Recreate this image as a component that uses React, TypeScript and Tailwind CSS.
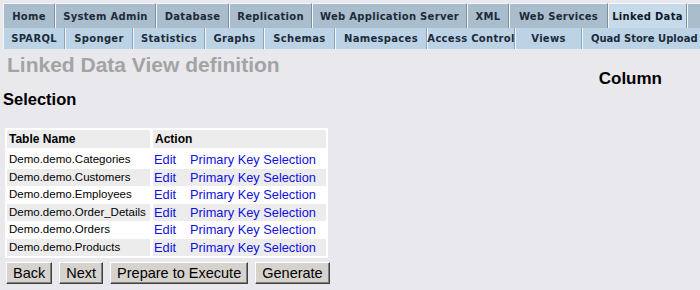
import React from "react";

const topTabs: { label: string; w: number; active?: boolean }[] = [
  { label: "Home", w: 52 },
  { label: "System Admin", w: 101 },
  { label: "Database", w: 73 },
  { label: "Replication", w: 83 },
  { label: "Web Application Server", w: 155 },
  { label: "XML", w: 42 },
  { label: "Web Services", w: 99 },
  { label: "Linked Data", w: 79, active: true },
  { label: "", w: 20 },
];

const subTabs: { label: string; w: number }[] = [
  { label: "SPARQL", w: 62 },
  { label: "Sponger", w: 68 },
  { label: "Statistics", w: 72 },
  { label: "Graphs", w: 59 },
  { label: "Schemas", w: 71 },
  { label: "Namespaces", w: 92 },
  { label: "Access Control", w: 88 },
  { label: "Views", w: 67 },
  { label: "Quad Store Upload", w: 130 },
];

const tables = [
  "Demo.demo.Categories",
  "Demo.demo.Customers",
  "Demo.demo.Employees",
  "Demo.demo.Order_Details",
  "Demo.demo.Orders",
  "Demo.demo.Products",
];

function Btn({ children }: { children: React.ReactNode }) {
  return (
    <button className="h-[22px] px-[6px] bg-[#d6d3ce] text-[14.5px] leading-none text-black border border-t-white border-l-white border-r-[#404040] border-b-[#404040] shadow-[inset_-1px_-1px_0_#808080]">
      {children}
    </button>
  );
}

export default function App() {
  return (
    <div className="w-[700px] h-[290px] overflow-hidden bg-[#e9e8ed] font-['Liberation_Sans',Arial,sans-serif]">
      <div className="pt-[3px] pl-[3px] font-['DejaVu_Sans',Verdana,sans-serif] font-bold text-[10px] tracking-[0.3px] text-[#1c2b3a]">
        <div className="flex h-[25px] whitespace-nowrap">
          {topTabs.map((t, i) => (
            <div
              key={i}
              style={{ width: t.w }}
              className={`shrink-0 flex items-center justify-center border-t border-l border-t-[#f4f7fa] border-l-[#f4f7fa] border-r border-r-[#7c8f9f] ${
                t.active ? "bg-[#c6dae9] text-[#0d1a28]" : "bg-[#a9bdcc]"
              }`}
            >
              {t.label}
            </div>
          ))}
        </div>
        <div className="flex h-[21px] whitespace-nowrap">
          {subTabs.map((t, i) => (
            <div
              key={i}
              style={{ width: t.w }}
              className={`shrink-0 flex items-center bg-[#bcd3e6] border-l border-l-[#f4f7fa] border-r border-r-[#8ea3b5] ${
                i === subTabs.length - 1 ? "justify-start pl-[8px] tracking-normal" : "justify-center"
              }`}
            >
              {t.label}
            </div>
          ))}
        </div>
      </div>

      <div className="flex justify-between">
        <div>
          <div className="pl-[7px] pt-[5px] text-[21px] font-bold text-[#a3a3a3] leading-[22px]">
            Linked Data View definition
          </div>
          <div className="pl-[3px] pt-[13px] text-[16.5px] font-bold text-black leading-[20px]">
            Selection
          </div>
        </div>
        <div className="pr-[38px] pt-[20px] text-[17px] font-bold text-black leading-[20px]">Column</div>
      </div>

      <div className="ml-[5px] mt-[19px] w-[323px] bg-white p-[2px] text-[11.5px]">
        <div className="grid grid-cols-[143px_1fr] gap-x-[3px]">
          <div className="bg-[#ececec] h-[18px] pl-[2px] font-bold text-[12px] flex items-center">Table Name</div>
          <div className="bg-[#ececec] h-[18px] pl-[2px] font-bold text-[12px] flex items-center">Action</div>
        </div>
        <div className="mt-[3px]">
          {tables.map((t, i) => (
            <div key={t} className="grid grid-cols-[143px_1fr] gap-x-[3px]">
              <div className={`h-[17.5px] pl-[2px] flex items-center text-black ${i % 2 ? "bg-[#ececec]" : ""}`}>{t}</div>
              <div className={`h-[17.5px] pl-[1px] flex items-center text-[12.8px] text-[#1010e0] ${i % 2 ? "bg-[#ececec]" : ""}`}>
                <span className="w-[36px]">Edit</span>
                <span>Primary Key Selection</span>
              </div>
            </div>
          ))}
        </div>
      </div>

      <div className="flex gap-[7px] ml-[6px] mt-[4px]">
        <Btn>Back</Btn>
        <Btn>Next</Btn>
        <Btn>Prepare to Execute</Btn>
        <Btn>Generate</Btn>
      </div>
    </div>
  );
}
